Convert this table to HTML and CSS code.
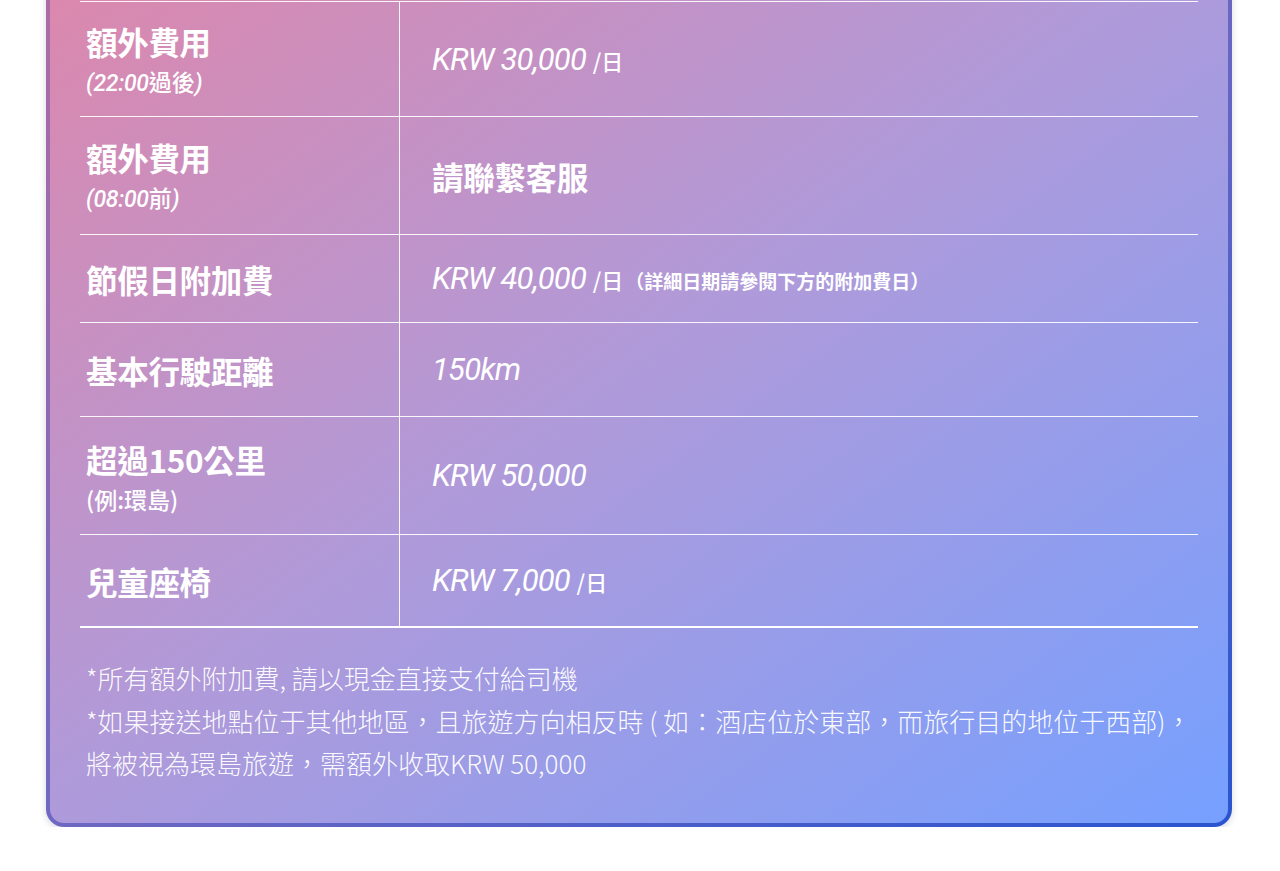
FILE: index.html
```html
<!DOCTYPE html>
<html lang="zh-Hant">
<head>
<meta charset="utf-8">
<title>額外費用</title>
<link rel="stylesheet" href="styles.css">
</head>
<body>
<div class="card">
  <table class="fees">
    <tr class="row tall first">
      <td class="label"><div class="main">額外費用</div><div class="sub"><i>(22:00</i>過後<i>)</i></div></td>
      <td class="value"><span class="num">KRW 30,000</span> <span class="unit">/日</span></td>
    </tr>
    <tr class="row tall">
      <td class="label"><div class="main">額外費用</div><div class="sub"><i>(08:00</i>前<i>)</i></div></td>
      <td class="value"><span class="cjk">請聯繫客服</span></td>
    </tr>
    <tr class="row r3">
      <td class="label"><div class="main">節假日附加費</div></td>
      <td class="value"><span class="num">KRW 40,000</span> <span class="unit">/日</span><span class="note">（詳細日期請參閱下方的附加費日）</span></td>
    </tr>
    <tr class="row r4">
      <td class="label"><div class="main">基本行駛距離</div></td>
      <td class="value"><span class="num">150km</span></td>
    </tr>
    <tr class="row tall">
      <td class="label"><div class="main">超過150公里</div><div class="sub">(例:環島)</div></td>
      <td class="value"><span class="num">KRW 50,000</span></td>
    </tr>
    <tr class="row r6 last">
      <td class="label"><div class="main">兒童座椅</div></td>
      <td class="value"><span class="num">KRW 7,000</span> <span class="unit">/日</span></td>
    </tr>
  </table>
  <div class="notes">
    <p>*所有額外附加費, 請以現金直接支付給司機</p>
    <p>*如果接送地點位于其他地區，且旅遊方向相反時 ( 如：酒店位於東部，而旅行目的地位于西部)，將被視為環島旅遊，需額外收取KRW 50,000</p>
  </div>
</div>
</body>
</html>
```

FILE: styles.css
```css
html, body {
  margin: 0;
  padding: 0;
  background: #ffffff;
}

body {
  font-family: "Noto Sans CJK TC", "Noto Sans", sans-serif;
  color: #ffffff;
  overflow: hidden;
}

.card {
  box-sizing: border-box;
  width: 1186px;
  margin: -44px 0 0 46px;
  padding: 41px 30px 38px 30px;
  border: 4px solid transparent;
  border-radius: 18px;
  background:
    linear-gradient(to bottom right, #dd87ab 0%, #b09ad9 48%, #76a0ff 100%) padding-box,
    linear-gradient(to bottom right, #b06aa6 0%, #6e68c2 50%, #2a54d0 100%) border-box;
  box-shadow: 0 2px 7px rgba(40, 40, 80, 0.18);
}

.fees {
  width: 100%;
  border-collapse: collapse;
  table-layout: fixed;
}

.row td {
  border-top: 1px solid rgba(255, 255, 255, 0.92);
  padding: 0;
  vertical-align: middle;
}

.row.last td {
  border-bottom: 2px solid #ffffff;
}

.row.tall td { height: 117px; }
.row.tall.first td { height: 114px; }
.row.r3 td { height: 87px; }
.row.r4 td { height: 93px; }
.row.r6 td { height: 91px; }

.label {
  width: 313px;
  padding-left: 6px !important;
  border-right: 1px solid rgba(255, 255, 255, 0.92);
}

.label .main {
  font-size: 31.5px;
  font-weight: 700;
  line-height: 38px;
  letter-spacing: -0.3px;
}

.label .sub {
  font-size: 23px;
  font-weight: 500;
  line-height: 26px;
  margin-top: 8px;
}

.label .sub i {
  font-family: Roboto, "Noto Sans CJK TC", sans-serif;
  font-style: italic;
  font-weight: 500;
  letter-spacing: -0.3px;
}

.value {
  padding-left: 32px !important;
}

.num {
  font-family: Roboto, "Noto Sans CJK TC", sans-serif;
  font-style: italic;
  font-size: 31px;
  font-weight: 400;
  letter-spacing: -0.8px;
}

.unit {
  font-size: 22px;
  font-weight: 500;
  margin-left: 3px;
}

.cjk {
  font-size: 31.5px;
  font-weight: 700;
  letter-spacing: -0.3px;
}

.note {
  font-size: 19px;
  font-weight: 700;
  margin-left: 2px;
}

.notes {
  padding: 29px 0 0 6px;
  font-size: 26px;
  font-weight: 300;
  line-height: 42.5px;
  color: rgba(255, 255, 255, 0.96);
}

.notes p {
  margin: 0;
}
```
